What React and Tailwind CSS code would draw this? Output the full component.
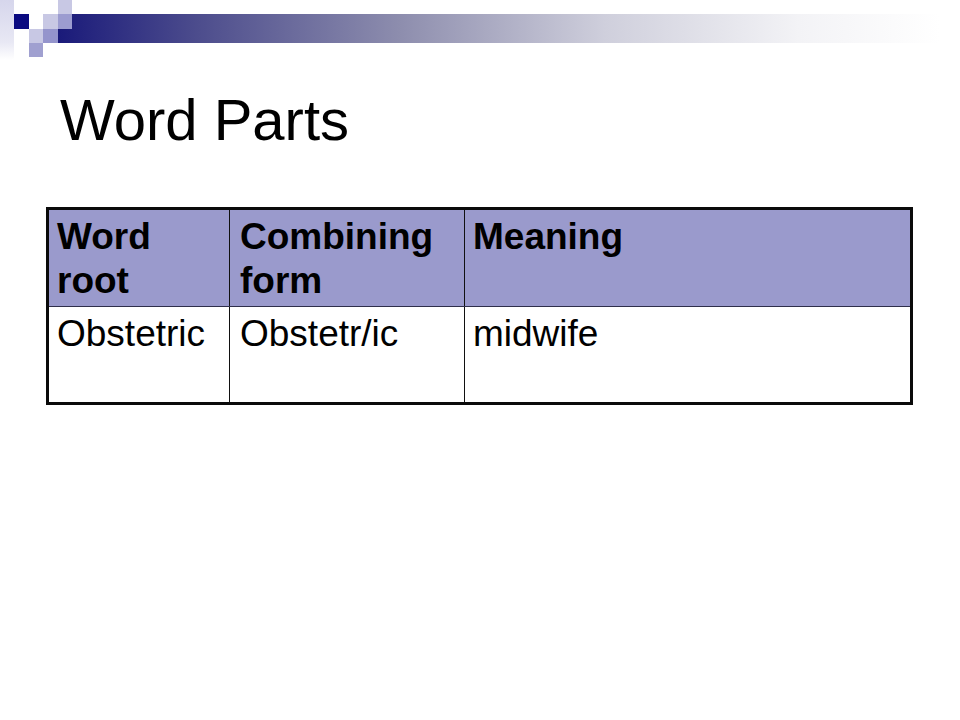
import React from "react";

const rows = [{ root: "Obstetric", form: "Obstetr/ic", meaning: "midwife" }];

function Corner() {
  return (
    <svg width="960" height="60" viewBox="0 0 960 60" className="block">
      <defs>
        <linearGradient id="bar" x1="58" y1="0" x2="940" y2="0" gradientUnits="userSpaceOnUse">
          <stop offset="0" stopColor="#1a1a7a" />
          <stop offset="0.16" stopColor="#4d4d8d" />
          <stop offset="0.39" stopColor="#8e8eae" />
          <stop offset="0.62" stopColor="#cfcfdc" />
          <stop offset="0.84" stopColor="#f3f3f6" />
          <stop offset="1" stopColor="#ffffff" />
        </linearGradient>
        <linearGradient id="strip" x1="0" y1="0" x2="0" y2="60" gradientUnits="userSpaceOnUse">
          <stop offset="0" stopColor="#d6d6ec" />
          <stop offset="0.7" stopColor="#e8e8f4" />
          <stop offset="1" stopColor="#ffffff" />
        </linearGradient>
      </defs>
      <rect x="0" y="0" width="14" height="60" fill="url(#strip)" />
      <rect x="58" y="14" width="902" height="29" fill="url(#bar)" />
      <rect x="14" y="14" width="15" height="15" fill="#0a0a80" />
      <rect x="58" y="0" width="14" height="14" fill="#c8c8e4" />
      <rect x="43" y="14" width="15" height="15" fill="#c8c8e4" />
      <rect x="58" y="14" width="14" height="15" fill="#9c9cd0" />
      <rect x="29" y="29" width="14" height="14" fill="#c8c8e4" />
      <rect x="43" y="29" width="15" height="14" fill="#9494cc" />
      <rect x="29" y="43" width="14" height="14" fill="#a0a0d0" />
    </svg>
  );
}

export default function App() {
  return (
    <div
      className="w-[960px] h-[720px] bg-white overflow-hidden text-black"
      style={{ fontFamily: '"Liberation Sans", Arial, sans-serif' }}
    >
      <Corner />

      <h1 className="mt-[31px] ml-[60px] text-[58px] leading-[58px] font-normal">Word Parts</h1>

      <div className="mt-[58px] ml-[46px] w-[867px] border-[3px] border-[#0a0a0a]">
        <div className="flex h-[97px] bg-[#9a9acc] border-b border-[#2e2e4a] font-bold text-[37px] leading-[44px]">
          <div className="w-[181px] pl-2 pt-[5px] border-r border-[#111]">
            Word
            <br />
            root
          </div>
          <div className="w-[235px] pl-[10px] pt-[5px] border-r border-[#111]">
            Combining
            <br />
            form
          </div>
          <div className="flex-1 pl-2 pt-[5px]">Meaning</div>
        </div>
        {rows.map((r) => (
          <div key={r.root} className="flex h-[95px] text-[37px] leading-[44px]">
            <div className="w-[181px] pl-2 pt-[5px] border-r border-[#111]">{r.root}</div>
            <div className="w-[235px] pl-[10px] pt-[5px] border-r border-[#111]">{r.form}</div>
            <div className="flex-1 pl-2 pt-[5px]">{r.meaning}</div>
          </div>
        ))}
      </div>
    </div>
  );
}
